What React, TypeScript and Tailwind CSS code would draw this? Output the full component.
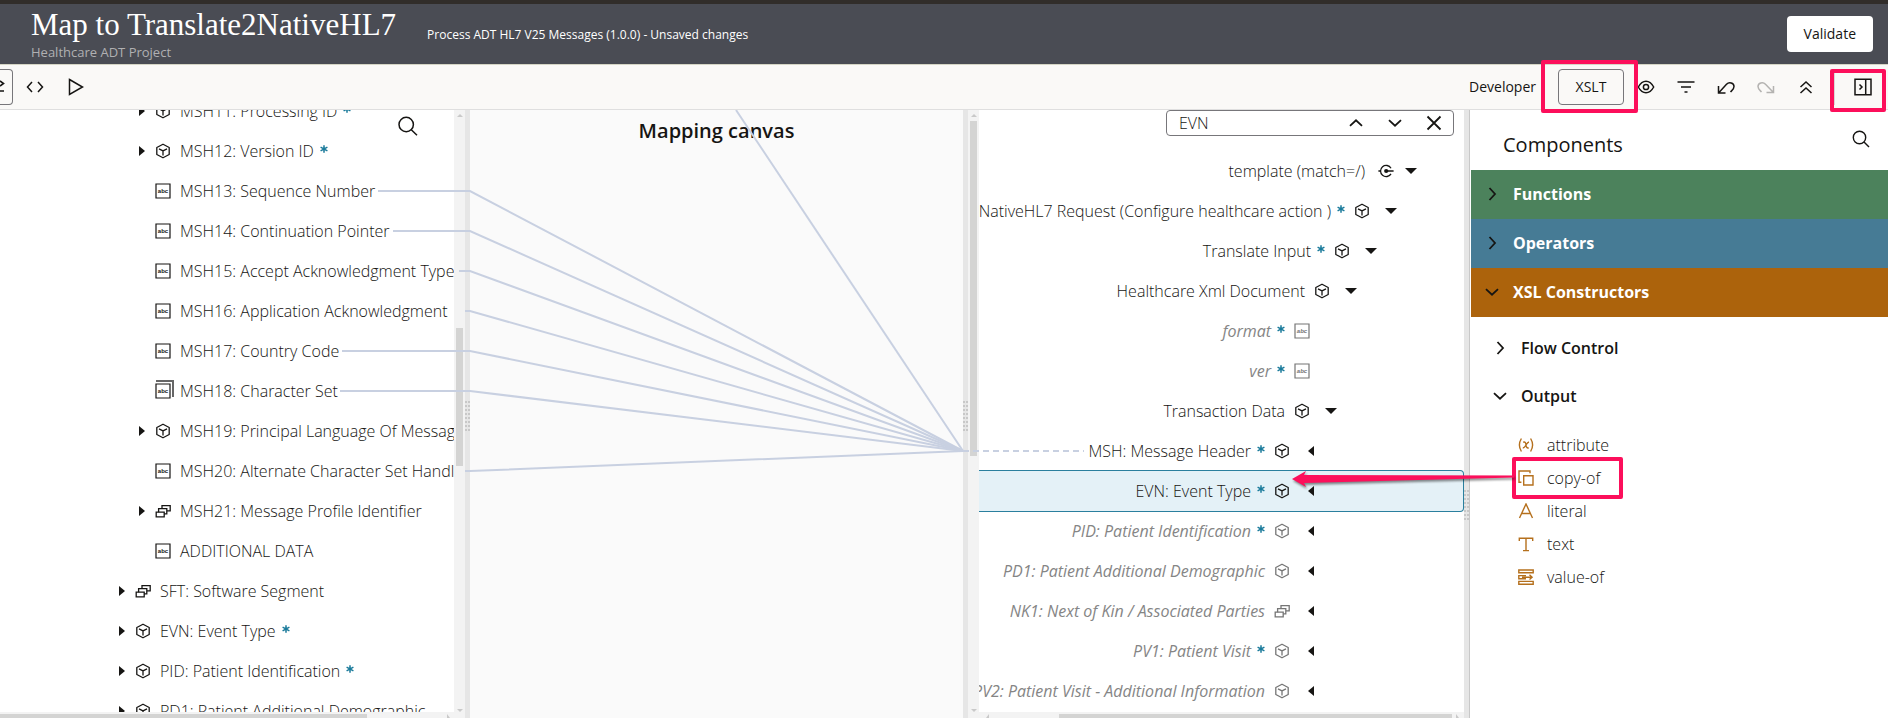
import React from 'react';

type Kind = 'cube' | 'field' | 'fields' | 'group' | 'template';

interface TreeNode {
  label: string;
  kind: Kind;
  depth: number;
  required?: boolean;
  expandable?: boolean;
  open?: boolean;
  muted?: boolean;
  selected?: boolean;
}

const SOURCE: TreeNode[] = [
  { label: 'MSH11: Processing ID', kind: 'cube', depth: 1, required: true, expandable: true },
  { label: 'MSH12: Version ID', kind: 'cube', depth: 1, required: true, expandable: true },
  { label: 'MSH13: Sequence Number', kind: 'field', depth: 1 },
  { label: 'MSH14: Continuation Pointer', kind: 'field', depth: 1 },
  { label: 'MSH15: Accept Acknowledgment Type', kind: 'field', depth: 1 },
  { label: 'MSH16: Application Acknowledgment', kind: 'field', depth: 1 },
  { label: 'MSH17: Country Code', kind: 'field', depth: 1 },
  { label: 'MSH18: Character Set', kind: 'fields', depth: 1 },
  { label: 'MSH19: Principal Language Of Message', kind: 'cube', depth: 1, expandable: true },
  { label: 'MSH20: Alternate Character Set Handling', kind: 'field', depth: 1 },
  { label: 'MSH21: Message Profile Identifier', kind: 'group', depth: 1, expandable: true },
  { label: 'ADDITIONAL DATA', kind: 'field', depth: 1 },
  { label: 'SFT: Software Segment', kind: 'group', depth: 0, expandable: true },
  { label: 'EVN: Event Type', kind: 'cube', depth: 0, required: true, expandable: true },
  { label: 'PID: Patient Identification', kind: 'cube', depth: 0, required: true, expandable: true },
  { label: 'PD1: Patient Additional Demographic', kind: 'cube', depth: 0, expandable: true },
];

const TARGET: TreeNode[] = [
  { label: 'template (match=/)', kind: 'template', depth: 0, expandable: true, open: true },
  { label: 'Translate2NativeHL7 Request (Configure healthcare action )', kind: 'cube', depth: 1, required: true, expandable: true, open: true },
  { label: 'Translate Input', kind: 'cube', depth: 2, required: true, expandable: true, open: true },
  { label: 'Healthcare Xml Document', kind: 'cube', depth: 3, expandable: true, open: true },
  { label: 'format', kind: 'field', depth: 4, required: true, muted: true },
  { label: 'ver', kind: 'field', depth: 4, required: true, muted: true },
  { label: 'Transaction Data', kind: 'cube', depth: 4, expandable: true, open: true },
  { label: 'MSH: Message Header', kind: 'cube', depth: 5, required: true, expandable: true },
  { label: 'EVN: Event Type', kind: 'cube', depth: 5, required: true, expandable: true, selected: true },
  { label: 'PID: Patient Identification', kind: 'cube', depth: 5, required: true, expandable: true, muted: true },
  { label: 'PD1: Patient Additional Demographic', kind: 'cube', depth: 5, expandable: true, muted: true },
  { label: 'NK1: Next of Kin / Associated Parties', kind: 'group', depth: 5, expandable: true, muted: true },
  { label: 'PV1: Patient Visit', kind: 'cube', depth: 5, required: true, expandable: true, muted: true },
  { label: 'PV2: Patient Visit - Additional Information', kind: 'cube', depth: 5, expandable: true, muted: true },
];

const TARGET_PAD = ['pr-[45px]', 'pr-[65px]', 'pr-[85px]', 'pr-[105px]', 'pr-[125px]', 'pr-[145px]'];

function NodeIcon({ kind, italic }: { kind: Kind; italic?: boolean }) {
  const base = 'h-4 w-4 shrink-0 overflow-visible';
  if (kind === 'cube')
    return (
      <svg viewBox="0 0 16 16" className={base} fill="none" stroke="currentColor" strokeWidth="1.3" strokeLinejoin="round" aria-hidden="true">
        <path d="M8 1.2 14.2 4.5v7L8 14.8 1.8 11.5v-7z" />
        <path d="M4 5.8 8 7.9l4-2.1M8 7.9v4.6" />
      </svg>
    );
  if (kind === 'group')
    return (
      <svg viewBox="0 0 16 16" className={base} fill="none" stroke="currentColor" strokeWidth="1.3" aria-hidden="true">
        <path d="M1.2 9.2h8v4.6h-8z" />
        <path d="M3.6 9.2V5.6h8.2v5.2H9.2M7 5.6V2.6h8.2v5.2h-3.4" />
      </svg>
    );
  if (kind === 'template')
    return (
      <svg viewBox="0 0 16 16" className={base} fill="none" stroke="currentColor" strokeWidth="1.3" aria-hidden="true">
        <path d="M13 5.2A5.6 5.6 0 1 0 13 10.8" />
        <path d="M0.4 8h2.2M9 8h6.6" />
        <circle cx="8.2" cy="8" r="2.1" fill="currentColor" stroke="none" />
      </svg>
    );
  return (
    <svg viewBox="0 0 16 16" className={base} fill="none" stroke="currentColor" aria-hidden="true">
      <path d="M1 1h14v14H1z" strokeWidth="1.2" />
      <text x="8" y="10" textAnchor="middle" fontSize="6" fontWeight="700" fontStyle={italic ? 'italic' : 'normal'} fontFamily="Liberation Sans, sans-serif" fill="currentColor" stroke="none">
        abc
      </text>
      {kind === 'fields' && <path d="M1-2h17v16" strokeWidth="2" stroke="#666" />}
    </svg>
  );
}

function Star() {
  return (
    <svg viewBox="0 0 8 8" className="mb-[5px] h-2 w-2 shrink-0" stroke="#1b7b9b" strokeWidth="1.5" aria-label="required">
      <path d="M4 .2v7.6M.6 2.1l6.8 3.8M.6 5.9l6.8-3.8" />
    </svg>
  );
}

function SourceRow({ node }: { node: TreeNode }) {
  return (
    <li className={`flex h-10 items-center gap-[9px] whitespace-nowrap ${node.depth === 1 ? 'pl-[138px]' : 'pl-[118px]'}`}>
      {node.expandable ? (
        <button aria-label={`Expand ${node.label}`} className="flex h-4 w-2 shrink-0 items-center justify-center">
          <svg viewBox="0 0 6 10" className="h-2.5 w-1.5" fill="currentColor">
            <path d="M0 0l6 5-6 5z" />
          </svg>
        </button>
      ) : (
        <span className="w-2 shrink-0" />
      )}
      <NodeIcon kind={node.kind} />
      <span className="flex shrink-0 items-center gap-1.5">
        {node.label}
        {node.required && <Star />}
      </span>
    </li>
  );
}

function TargetRow({ node }: { node: TreeNode }) {
  const tone = node.muted ? 'font-normal italic text-[#858585]' : '';
  const frame = node.selected
    ? '-my-px h-[42px] rounded-r border-y border-r border-[#2a7f9e] bg-[#e4f1f7] pr-36'
    : `h-10 ${TARGET_PAD[node.depth]}`;
  return (
    <li className={`flex items-center justify-end whitespace-nowrap ${frame}`}>
      <span className={`flex shrink-0 items-center ${node.kind === 'template' ? 'mr-[13px]' : 'mr-[9px]'} gap-1.5 ${tone}`}>
        {node.label}
        {node.required && <Star />}
      </span>
      <span className={`shrink-0 ${node.muted ? 'text-[#757575]' : ''}`}>
        <NodeIcon kind={node.kind} italic={node.muted} />
      </span>
      {node.expandable ? (
        <button
          aria-label={`Toggle ${node.label}`}
          className={`flex h-4 w-4 shrink-0 items-center justify-center ${node.kind === 'template' ? 'ml-[9px]' : 'ml-[13px]'}`}
        >
          {node.open ? (
            <svg viewBox="0 0 12 6" className="h-1.5 w-3" fill="currentColor">
              <path d="M0 0h12L6 6z" />
            </svg>
          ) : (
            <svg viewBox="0 0 6 10" className="h-2.5 w-1.5" fill="currentColor">
              <path d="M6 0v10L0 5z" />
            </svg>
          )}
        </button>
      ) : (
        <span className="ml-[13px] w-4 shrink-0" />
      )}
    </li>
  );
}

function Arrow({ d }: { d: string }) {
  return (
    <svg viewBox="0 0 6 4" className="h-1 w-1.5" fill="#c9c9c9" aria-hidden="true">
      <path d={d} />
    </svg>
  );
}

function VScroll({ top, size }: { top: string; size: string }) {
  return (
    <div className="flex w-[11px] shrink-0 flex-col items-center bg-[#f3f3f3] pt-1 pb-1.5" aria-hidden="true">
      <Arrow d="M3 0l3 3H0z" />
      <div className={`w-[7px] bg-[#d4d4d3] ${top} ${size}`} />
      <div className="mt-auto">
        <Arrow d="M3 4l3-3H0z" />
      </div>
    </div>
  );
}

function Grip({ pad }: { pad: string }) {
  return (
    <div className={`w-[5px] shrink-0 bg-[#e6e6e6] ${pad}`} role="separator" aria-orientation="vertical">
      <svg viewBox="0 0 5 30" className="h-[30px] w-[5px]" fill="#c8c8c8">
        {[0, 4, 8, 12, 16, 20, 24, 28].map((y) => (
          <path key={y} d={`M0 ${y}h2v2H0zM3 ${y}h2v2H3z`} />
        ))}
      </svg>
    </div>
  );
}

function Chevron({ dir, strokeWidth = 1.8 }: { dir: 'right' | 'down' | 'up'; strokeWidth?: number }) {
  const d = dir === 'right' ? 'M5.5 2l5.5 6-5.5 6' : dir === 'down' ? 'M2 5.2l6 5.5 6-5.5' : 'M2 10.8l6-5.5 6 5.5';
  return (
    <svg viewBox="0 0 16 16" className="h-4 w-4 shrink-0" fill="none" stroke="currentColor" strokeWidth={strokeWidth} aria-hidden="true">
      <path d={d} />
    </svg>
  );
}

function IconButton({ label, children, className = '' }: { label: string; children: React.ReactNode; className?: string }) {
  return (
    <button aria-label={label} className={`flex h-9 w-10 items-center justify-center ${className}`}>
      <svg viewBox="0 0 20 20" className="h-5 w-5" fill="none" stroke="currentColor" strokeWidth="1.5">
        {children}
      </svg>
    </button>
  );
}

function Connections() {
  const links: [number, number][] = [
    [378, 81],
    [393, 121],
    [459, 161],
    [465, 201],
    [342, 241],
    [340, 281],
    [465, 361],
  ];
  return (
    <svg className="pointer-events-none absolute top-0 left-0 h-full w-[1100px]" fill="none" stroke="#c8d0e1" strokeWidth="2" aria-hidden="true">
      {links.map(([x, y]) => (
        <path key={y} d={`M${x} ${y}H470L963 341`} />
      ))}
      <path d="M736 0L963 341" />
      <path d="M963 341H1084" strokeDasharray="6 4" />
    </svg>
  );
}

const OUTPUTS: { label: string; icon: React.ReactNode }[] = [
  {
    label: 'attribute',
    icon: (
      <>
        <path d="M3.4 1.5Q-.6 8 3.4 14.5M12.6 1.5q4 6.5 0 13" />
        <path d="M5.2 5.2c2.2-.6 2.6 1 2.8 2.8s.8 3.4 2.8 2.8M11 5c-1.5.2-2.2 1.6-3 3s-1.6 3-3.2 3" />
      </>
    ),
  },
  { label: 'copy-of', icon: <path d="M5.7 5.7h9.3v9.3H5.7zM3.4 12.2H1V1h11v2.3" /> },
  { label: 'literal', icon: <path d="M1.5 15L8 1l6.5 14M3.7 10.5h8.6" /> },
  { label: 'text', icon: <path d="M1.3 5V2.2h13.4V5M8 2.2v12.4M5 14.6h6" /> },
  { label: 'value-of', icon: <path d="M.8 1h14.4v2.8H.8zM.8 12.4h14.4v2.8H.8zM8 6.6H.8v3.2H8M4 8.2h10M11.5 5.800l2.6 2.4-2.6 2.4" /> },
];

function ComponentsPanel() {
  const sections = [
    { label: 'Functions', tone: 'bg-[#4c825c]', open: false },
    { label: 'Operators', tone: 'bg-[#467b95]', open: false },
    { label: 'XSL Constructors', tone: 'bg-[#ac630c]', open: true },
  ];
  return (
    <aside className="relative z-10 w-[419px] shrink-0 border-l border-[#c8c8c8] bg-white pl-px">
      <div className="flex h-[60px] items-center justify-between pt-2.5 pr-[18px] pl-8">
        <h2 className="text-xl">Components</h2>
        <button aria-label="Search components" className="mb-3">
          <svg viewBox="0 0 18 18" className="h-[18px] w-[18px]" fill="none" stroke="currentColor" strokeWidth="1.4">
            <circle cx="7.5" cy="7.5" r="6.2" />
            <path d="M12 12l5 5" />
          </svg>
        </button>
      </div>
      {sections.map((s) => (
        <button key={s.label} className={`flex h-[49px] w-full items-center gap-[13px] pb-0.5 pl-[13px] text-base font-bold ${s.tone}`}>
          <Chevron dir={s.open ? 'down' : 'right'} />
          <span className="text-white">{s.label}</span>
        </button>
      ))}
      <div className="pt-[7px] font-semibold">
        <button className="flex h-12 w-full items-center gap-[13px] pl-[21px]">
          <Chevron dir="right" />
          Flow Control
        </button>
        <button className="flex h-12 w-full items-center gap-[13px] pl-[21px]">
          <Chevron dir="down" />
          Output
        </button>
      </div>
      <ul className="pt-2 font-light">
        {OUTPUTS.map((o) => (
          <li key={o.label} className="relative flex h-[33px] items-center gap-[13px] pl-[47px]">
            <svg viewBox="0 0 16 16" className="h-4 w-4 shrink-0" fill="none" stroke="#b5701d" strokeWidth="1.4" aria-hidden="true">
              {o.icon}
            </svg>
            {o.label}
            {o.label === 'copy-of' && (
              <span className="pointer-events-none absolute -top-1 left-[41px] block h-[42px] w-[111px] rounded-xs border-4 border-[#fc0f5b]">
                <svg viewBox="0 0 224 24" className="absolute top-1.5 right-full h-6 w-[224px] overflow-visible drop-shadow-[1px_2px_1px_rgba(0,0,0,0.45)]" fill="#fc0f5b" aria-hidden="true">
                  <path d="M0 12L14 4 12 8 222 8.5V10.5L12 16 14 20z" />
                </svg>
              </span>
            )}
          </li>
        ))}
      </ul>
    </aside>
  );
}

export default function App() {
  return (
    <div className="flex h-screen flex-col overflow-hidden bg-white font-['Open_Sans','Noto_Sans',sans-serif] text-base text-[#161513]">
      <header className="flex h-16 shrink-0 items-center justify-between border-t-4 border-[#312d2a] bg-[#4a4c54] pr-[15px] pl-[31px]">
        <div className="flex items-center gap-[31px]">
          <div>
            <h1 className="font-['Liberation_Serif',serif] text-[31px] leading-[36px] text-white">Map to Translate2NativeHL7</h1>
            <p className="text-[13px] leading-[18px] text-[#b0b0b2]">Healthcare ADT Project</p>
          </div>
          <p className="pt-0.5 text-xs font-medium text-white">Process ADT HL7 V25 Messages (1.0.0) - Unsaved changes</p>
        </div>
        <button className="h-9 rounded bg-white px-[17px] text-sm font-medium">Validate</button>
      </header>

      <div className="flex h-[46px] shrink-0 items-center justify-between border-t border-b border-t-[#d5d5c5] border-b-[#dfdfdf] bg-[#faf9f7]">
        <div className="flex items-center gap-0.5">
          <button aria-label="Map view" className="flex h-9 w-[13px] items-center justify-start rounded-r border border-l-0 border-[#77767a]">
            <svg viewBox="0 0 5 14" className="h-3.5 w-[5px]" fill="none" stroke="currentColor" strokeWidth="1.6">
              <path d="M0 1l3.5 2.5L0 6M0 11h4" />
            </svg>
          </button>
          <IconButton label="Code view">
            <path d="M7 5L2.5 10 7 15M13 5l4.5 5-4.5 5" />
          </IconButton>
          <IconButton label="Test">
            <path d="M2.5 2.5L15.5 10 2.5 17.5z" />
          </IconButton>
        </div>
        <div className="flex items-center pr-[5px]">
          <button className="mr-[22px] text-sm">Developer</button>
          <div className="relative mr-0.5">
            <button className="h-9 w-[66px] rounded border border-[#77767a] text-sm">XSLT</button>
            <span className="pointer-events-none absolute -top-[9px] -right-[14px] -bottom-2 -left-[17px] z-20 rounded-xs border-4 border-[#fc0f5b]" />
          </div>
          <IconButton label="Preview">
            <path d="M2.3 10Q5.5 4.2 10 4.2T17.7 10Q14.5 15.8 10 15.8T2.3 10z" />
            <circle cx="10" cy="10" r="2.6" />
          </IconButton>
          <IconButton label="Filter">
            <path d="M1.5 5h17M5 10h10M8.5 15h3" strokeWidth="1.7" />
          </IconButton>
          <IconButton label="Undo">
            <path d="M2.5 9v7H9.5M2.8 15.7L10.5 7.3c2.5-2.8 7.5-1.6 7.5 2.2 0 2.5-1.5 3.5-3.5 5.5" />
          </IconButton>
          <IconButton label="Redo" className="text-[#b4b3b1]">
            <path d="M17.5 9v6.5H10.5M17.2 15.2L9.5 7.3C7 4.5 2 5.7 2 9.5c0 2.5 1.5 3.5 3.5 5.5" />
          </IconButton>
          <IconButton label="Collapse all">
            <path d="M4.5 10L10 5l5.5 5M4.5 16L10 11l5.5 5" />
          </IconButton>
          <div className="relative ml-2 flex h-9 items-center">
            <span className="mr-2 h-9 w-px bg-[#d9d8d6]" />
            <IconButton label="Toggle components panel">
              <path d="M2 2.2h16v15.6H2zM12.7 2.2v15.6M6.5 7.5L9 10l-2.5 2.5" />
            </IconButton>
            <span className="pointer-events-none absolute top-0 -right-[3px] -bottom-[7px] -left-1 z-20 rounded-xs border-4 border-[#fc0f5b]" />
          </div>
        </div>
      </div>

      <main className="relative flex min-h-0 flex-1">
        <section aria-label="Source" className="flex w-[465px] shrink-0">
          <div className="relative flex min-w-0 flex-1 flex-col">
            <div className="min-h-0 flex-1 overflow-hidden">
              <ul className="-mt-[19px] font-light">
                {SOURCE.map((n) => (
                  <SourceRow key={n.label} node={n} />
                ))}
              </ul>
            </div>
            <button aria-label="Search source" className="absolute top-1.5 right-9">
              <svg viewBox="0 0 20 20" className="h-5 w-5" fill="none" stroke="currentColor" strokeWidth="1.5">
                <circle cx="8.2" cy="8.5" r="7.2" />
                <path d="M13.3 13.7l5.7 5.6" />
              </svg>
            </button>
            <div className="flex h-1.5 shrink-0 items-end bg-[#f3f3f3]">
              <div className="h-1 w-[367px] bg-[#d4d4d3]" />
              <span className="ml-20">
                <Arrow d="M0 0l3 4H0z" />
              </span>
            </div>
          </div>
          <VScroll top="mt-[210px]" size="h-[138px]" />
        </section>
        <Grip pad="pt-[291px]" />

        <section className="min-w-0 flex-1 bg-[#fafafa] pt-[7px] text-center">
          <h2 className="text-xl font-semibold">Mapping canvas</h2>
        </section>

        <Grip pad="pt-[291px]" />
        <section aria-label="Target" className="flex w-[496px] shrink-0">
          <VScroll top="mt-[3px]" size="h-[335px]" />
          <div className="flex min-w-0 flex-1 flex-col">
            <div className="min-h-0 flex-1 overflow-hidden">
              <div className="mr-2.5 ml-auto flex h-[26px] w-[288px] items-center rounded border border-[#77767a] bg-white">
                <input aria-label="Search target" defaultValue="EVN" className="min-w-0 flex-1 bg-transparent pl-3 font-light outline-none" />
                <button aria-label="Previous match" className="flex w-[39px] justify-center">
                  <Chevron dir="up" />
                </button>
                <button aria-label="Next match" className="flex w-[39px] justify-center">
                  <Chevron dir="down" />
                </button>
                <button aria-label="Clear search" className="flex w-[39px] justify-center">
                  <svg viewBox="0 0 16 16" className="h-4 w-4" fill="none" stroke="currentColor" strokeWidth="1.8">
                    <path d="M1.5 1.5l13 13M14.5 1.5l-13 13" />
                  </svg>
                </button>
              </div>
              <ul className="pt-[15px] font-light">
                {TARGET.map((n) => (
                  <TargetRow key={n.label} node={n} />
                ))}
              </ul>
            </div>
            <div className="flex h-1.5 shrink-0 items-end justify-between bg-[#f3f3f3] pr-0.5 pl-1">
              <Arrow d="M6 0L3 4h3z" />
              <div className="flex items-end gap-1">
                <div className="h-1 w-[393px] bg-[#d4d4d3]" />
                <Arrow d="M0 0l3 4H0z" />
              </div>
            </div>
          </div>
        </section>
        <Grip pad="pt-[380px]" />
        <ComponentsPanel />
        <Connections />
      </main>
    </div>
  );
}
